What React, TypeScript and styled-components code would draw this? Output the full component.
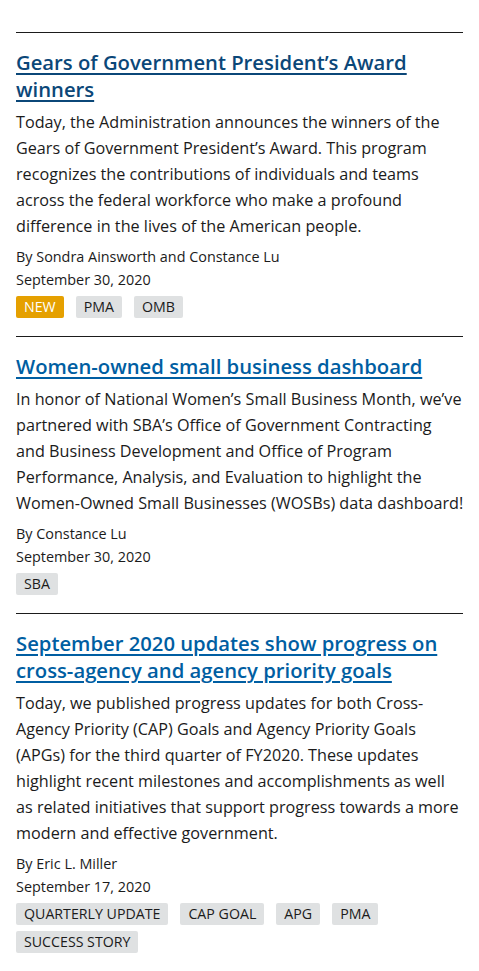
import React from "react";
import styled, { createGlobalStyle } from "styled-components";

const Global = createGlobalStyle`
  html, body { margin: 0; padding: 0; background: #fff; }
  body { font-family: "Open Sans", "Noto Sans", sans-serif; color: #1b1b1b; }
  * { box-sizing: border-box; }
`;

const Page = styled.main`
  padding: 32px 16px 0;
`;

const Article = styled.article`
  border-top: 1px solid #1b1b1b;
  padding: 16px 0 18px;
`;

const Title = styled.h2`
  margin: 0 0 6px;
  font-size: 20.25px;
  line-height: 27px;
  font-weight: 600;
`;

const TitleLink = styled.a<{ $visited?: boolean }>`
  color: ${(p) => (p.$visited ? "#0b4778" : "#005ea2")};
  text-decoration: underline;
  text-decoration-thickness: 2px;
  text-underline-offset: 3px;
`;

const Body = styled.p`
  margin: 0 -1px 6px 0;
  font-size: 16.2px;
  line-height: 26px;
`;

const Meta = styled.div`
  font-size: 14.4px;
  line-height: 23px;
`;

const Tags = styled.ul`
  list-style: none;
  margin: 5px 0 0;
  padding: 0;
  display: flex;
  flex-wrap: wrap;
  gap: 6px 12px;
`;

const Tag = styled.li<{ $new?: boolean }>`
  height: 22px;
  padding: 0 8px;
  border-radius: 2px;
  font-size: 14.2px;
  line-height: 22px;
  text-transform: uppercase;
  background: ${(p) => (p.$new ? "#e5a000" : "#dfe1e2")};
  color: ${(p) => (p.$new ? "#ffffff" : "#1b1b1b")};
`;

type Post = {
  title: string;
  visited?: boolean;
  body: string;
  author: string;
  date: string;
  tags: { label: string; isNew?: boolean }[];
};

const posts: Post[] = [
  {
    title: "Gears of Government President’s Award winners",
    visited: true,
    body:
      "Today, the Administration announces the winners of the Gears of Government President’s Award. This program recognizes the contributions of individuals and teams across the federal workforce who make a profound difference in the lives of the American people.",
    author: "By Sondra Ainsworth and Constance Lu",
    date: "September 30, 2020",
    tags: [{ label: "New", isNew: true }, { label: "PMA" }, { label: "OMB" }],
  },
  {
    title: "Women-owned small business dashboard",
    body:
      "In honor of National Women’s Small Business Month, we’ve partnered with SBA’s Office of Government Contracting and Business Development and Office of Program Performance, Analysis, and Evaluation to highlight the Women-Owned Small Businesses (WOSBs) data dashboard!",
    author: "By Constance Lu",
    date: "September 30, 2020",
    tags: [{ label: "SBA" }],
  },
  {
    title: "September 2020 updates show progress on cross-agency and agency priority goals",
    body:
      "Today, we published progress updates for both Cross-Agency Priority (CAP) Goals and Agency Priority Goals (APGs) for the third quarter of FY2020. These updates highlight recent milestones and accomplishments as well as related initiatives that support progress towards a more modern and effective government.",
    author: "By Eric L. Miller",
    date: "September 17, 2020",
    tags: [
      { label: "Quarterly update" },
      { label: "CAP Goal" },
      { label: "APG" },
      { label: "PMA" },
      { label: "Success story" },
    ],
  },
];

export default function App() {
  return (
    <>
      <Global />
      <Page>
        {posts.map((p) => (
          <Article key={p.title}>
            <Title>
              <TitleLink href="#" $visited={p.visited}>
                {p.title}
              </TitleLink>
            </Title>
            <Body>{p.body}</Body>
            <Meta>{p.author}</Meta>
            <Meta>{p.date}</Meta>
            <Tags>
              {p.tags.map((t) => (
                <Tag key={t.label} $new={t.isNew}>
                  {t.label}
                </Tag>
              ))}
            </Tags>
          </Article>
        ))}
      </Page>
    </>
  );
}
